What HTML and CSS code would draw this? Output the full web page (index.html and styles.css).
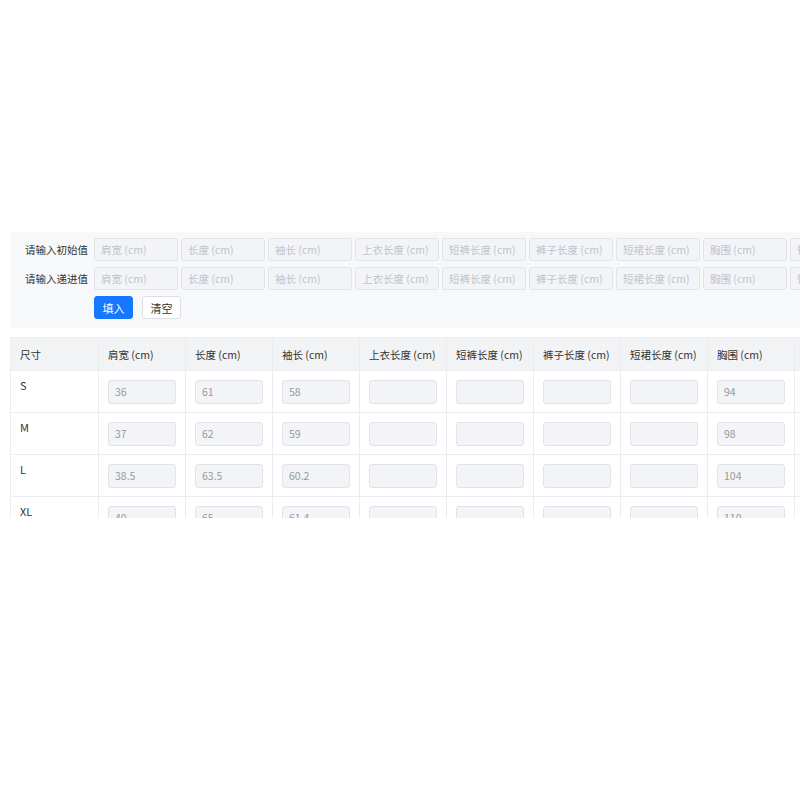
FILE: index.html
```html
<!DOCTYPE html>
<html lang="zh-CN">
<head>
    <meta charset="UTF-8">
    <title>尺码表</title>
    <link rel="stylesheet" href="styles.css">
</head>
<body>

<div class="page">
    <!-- 批量填入 -->
    <div class="fill-panel">
        <div class="fill-row">
            <span class="fill-label">请输入初始值</span>
            <input class="fill-input" placeholder="肩宽 (cm)">
            <input class="fill-input" placeholder="长度 (cm)">
            <input class="fill-input" placeholder="袖长 (cm)">
            <input class="fill-input" placeholder="上衣长度 (cm)">
            <input class="fill-input" placeholder="短裤长度 (cm)">
            <input class="fill-input" placeholder="裤子长度 (cm)">
            <input class="fill-input" placeholder="短裙长度 (cm)">
            <input class="fill-input" placeholder="胸围 (cm)">
            <input class="fill-input" placeholder="臀围">
        </div>
        <div class="fill-row">
            <span class="fill-label">请输入递进值</span>
            <input class="fill-input" placeholder="肩宽 (cm)">
            <input class="fill-input" placeholder="长度 (cm)">
            <input class="fill-input" placeholder="袖长 (cm)">
            <input class="fill-input" placeholder="上衣长度 (cm)">
            <input class="fill-input" placeholder="短裤长度 (cm)">
            <input class="fill-input" placeholder="裤子长度 (cm)">
            <input class="fill-input" placeholder="短裙长度 (cm)">
            <input class="fill-input" placeholder="胸围 (cm)">
            <input class="fill-input" placeholder="臀围">
        </div>
        <div class="fill-actions">
            <button class="btn btn-primary">填入</button>
            <button class="btn">清空</button>
        </div>
    </div>

    <!-- 尺码表 -->
    <div class="table-wrap">
        <table class="size-table">
            <colgroup>
                <col class="col-size">
                <col class="col-field"><col class="col-field"><col class="col-field">
                <col class="col-field"><col class="col-field"><col class="col-field">
                <col class="col-field"><col class="col-field"><col class="col-field">
            </colgroup>
            <thead>
                <tr>
                    <th>尺寸</th>
                    <th>肩宽 (cm)</th>
                    <th>长度 (cm)</th>
                    <th>袖长 (cm)</th>
                    <th>上衣长度 (cm)</th>
                    <th>短裤长度 (cm)</th>
                    <th>裤子长度 (cm)</th>
                    <th>短裙长度 (cm)</th>
                    <th>胸围 (cm)</th>
                    <th></th>
                </tr>
            </thead>
            <tbody>
                <tr>
                    <td class="size-name">S</td>
                    <td><input class="cell-input" value="36" readonly></td>
                    <td><input class="cell-input" value="61" readonly></td>
                    <td><input class="cell-input" value="58" readonly></td>
                    <td><input class="cell-input" readonly></td>
                    <td><input class="cell-input" readonly></td>
                    <td><input class="cell-input" readonly></td>
                    <td><input class="cell-input" readonly></td>
                    <td><input class="cell-input" value="94" readonly></td>
                    <td><input class="cell-input" readonly></td>
                </tr>
                <tr>
                    <td class="size-name">M</td>
                    <td><input class="cell-input" value="37" readonly></td>
                    <td><input class="cell-input" value="62" readonly></td>
                    <td><input class="cell-input" value="59" readonly></td>
                    <td><input class="cell-input" readonly></td>
                    <td><input class="cell-input" readonly></td>
                    <td><input class="cell-input" readonly></td>
                    <td><input class="cell-input" readonly></td>
                    <td><input class="cell-input" value="98" readonly></td>
                    <td><input class="cell-input" readonly></td>
                </tr>
                <tr>
                    <td class="size-name">L</td>
                    <td><input class="cell-input" value="38.5" readonly></td>
                    <td><input class="cell-input" value="63.5" readonly></td>
                    <td><input class="cell-input" value="60.2" readonly></td>
                    <td><input class="cell-input" readonly></td>
                    <td><input class="cell-input" readonly></td>
                    <td><input class="cell-input" readonly></td>
                    <td><input class="cell-input" readonly></td>
                    <td><input class="cell-input" value="104" readonly></td>
                    <td><input class="cell-input" readonly></td>
                </tr>
                <tr>
                    <td class="size-name">XL</td>
                    <td><input class="cell-input" value="40" readonly></td>
                    <td><input class="cell-input" value="65" readonly></td>
                    <td><input class="cell-input" value="61.4" readonly></td>
                    <td><input class="cell-input" readonly></td>
                    <td><input class="cell-input" readonly></td>
                    <td><input class="cell-input" readonly></td>
                    <td><input class="cell-input" readonly></td>
                    <td><input class="cell-input" value="110" readonly></td>
                    <td><input class="cell-input" readonly></td>
                </tr>
            </tbody>
        </table>
    </div>
</div>

</body>
</html>
```

FILE: styles.css
```css
body {
    font-family: "Noto Sans CJK SC", "Noto Sans", sans-serif;
    font-size: 11px;
    color: #333;
    background-color: #fff;
    margin: 0;
    padding: 0;
    overflow: hidden;
}
.page {
    padding: 232px 0 0 10px;
}
.fill-panel {
    width: 820px;
    padding: 6px 0 9px 15px;
    background-color: #f7f8fa;
    display: flex;
    flex-direction: column;
    gap: 6px;
    white-space: nowrap;
    overflow: hidden;
}
.fill-row {
    display: flex;
    align-items: center;
    gap: 3px;
}
.fill-label {
    width: 66px;
    flex-shrink: 0;
    color: #333;
    font-size: 10.5px;
}
.fill-input,
.cell-input {
    box-sizing: border-box;
    flex-shrink: 0;
    font-family: inherit;
    font-size: 10.5px;
    padding: 0 6px;
    border: 1px solid #e1e3e8;
    border-radius: 3px;
    background-color: #f3f4f7;
    color: #999;
    outline: none;
}
.fill-input {
    width: 84px;
    height: 23px;
}
.fill-input::placeholder {
    color: #c0c4cc;
}
.fill-actions {
    display: flex;
    gap: 9px;
    padding-left: 69px;
}
.btn {
    width: 39px;
    height: 23px;
    padding: 0;
    font-family: inherit;
    font-size: 11px;
    color: #333;
    background-color: #fff;
    border: 1px solid #dcdfe6;
    border-radius: 3px;
    cursor: pointer;
}
.btn-primary {
    color: #fff;
    background-color: #1677ff;
    border-color: #1677ff;
}
.table-wrap {
    margin-top: 9px;
    height: 181px;
    overflow: hidden;
}
.size-table {
    width: 871px;
    table-layout: fixed;
    border-collapse: collapse;
}
.col-size {
    width: 88px;
}
.col-field {
    width: 87px;
}
.size-table th,
.size-table td {
    border: 1px solid #ebedf0;
    text-align: left;
    padding: 0 9px;
    font-weight: normal;
}
.size-table th {
    height: 32px;
    background-color: #f2f3f5;
    color: #333;
    font-size: 10.5px;
}
.size-table tbody tr {
    height: 42px;
}
.size-table td {
    vertical-align: middle;
}
.size-table td.size-name {
    vertical-align: top;
    padding-top: 6px;
    color: #333;
}
.cell-input {
    display: block;
    width: 68px;
    height: 24px;
}
```
